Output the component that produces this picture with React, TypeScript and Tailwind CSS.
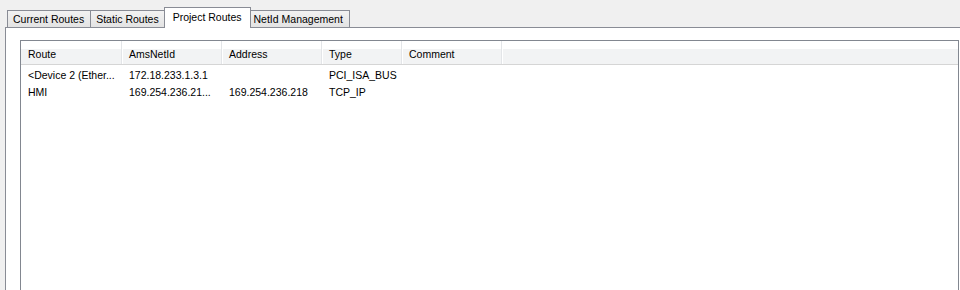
import React from 'react';

const tabs = ['Current Routes', 'Static Routes', 'Project Routes', 'NetId Management'];
const activeTab = 'Project Routes';

const columns = [
  { label: 'Route', width: 'w-[101px]' },
  { label: 'AmsNetId', width: 'w-[100px]' },
  { label: 'Address', width: 'w-[100px]' },
  { label: 'Type', width: 'w-[80px]' },
  { label: 'Comment', width: 'w-[100px]' },
];

const rows = [
  ['<Device 2 (Ether...', '172.18.233.1.3.1', '', 'PCI_ISA_BUS', ''],
  ['HMI', '169.254.236.21...', '169.254.236.218', 'TCP_IP', ''],
];

function Tab({ label }: { label: string }) {
  if (label === activeTab) {
    return (
      <div className="relative z-10 -mx-[2px] -mb-px h-[21px] px-[8px] pt-[2px] bg-white border border-b-0 border-[#898c95] whitespace-nowrap">
        {label}
      </div>
    );
  }
  return (
    <div className="h-[17px] pl-[5px] pr-[6px] pt-[1px] border border-b-0 border-[#898c95] -ml-px first:ml-0 bg-gradient-to-b from-[#f2f2f2] to-[#e3e3e3] whitespace-nowrap">
      {label}
    </div>
  );
}

export default function App() {
  return (
    <div
      className="w-[960px] h-[290px] overflow-hidden bg-[#f0f0f0] text-[10.5px] leading-[14px] text-black"
      style={{ fontFamily: '"Liberation Sans", Arial, sans-serif' }}
    >
      {/* Tab strip */}
      <div className="flex items-end h-[27px] pl-[7px]">
        {tabs.map((t) => (
          <Tab key={t} label={t} />
        ))}
      </div>

      {/* Tab page */}
      <div className="ml-[5px] h-[263px] bg-white border-t border-l border-[#898c95] pl-[14px] pt-[12px]">
        <div className="h-full bg-white border-t border-l border-r border-[#828790] mr-[1px]">
          {/* Header */}
          <div className="flex h-[24px] border-b border-[#d5d5d5] bg-[linear-gradient(to_bottom,#ffffff_0%,#ffffff_35%,#f2f3f4_36%,#f2f3f4_100%)]">
            {columns.map((c) => (
              <div
                key={c.label}
                className={`${c.width} flex items-center pl-[7px] pt-[2px] border-r border-[#e3e5e8] shadow-[1px_0_0_#ffffff]`}
              >
                {c.label}
              </div>
            ))}
            <div className="flex-1" />
          </div>

          {/* Rows */}
          <div className="pt-[1px]">
            {rows.map((r, i) => (
              <div key={i} className="flex h-[17px] items-center">
                {r.map((cell, j) => (
                  <div key={j} className={`${columns[j].width} pl-[7px] whitespace-nowrap overflow-hidden`}>
                    {cell}
                  </div>
                ))}
              </div>
            ))}
          </div>
        </div>
      </div>
    </div>
  );
}
